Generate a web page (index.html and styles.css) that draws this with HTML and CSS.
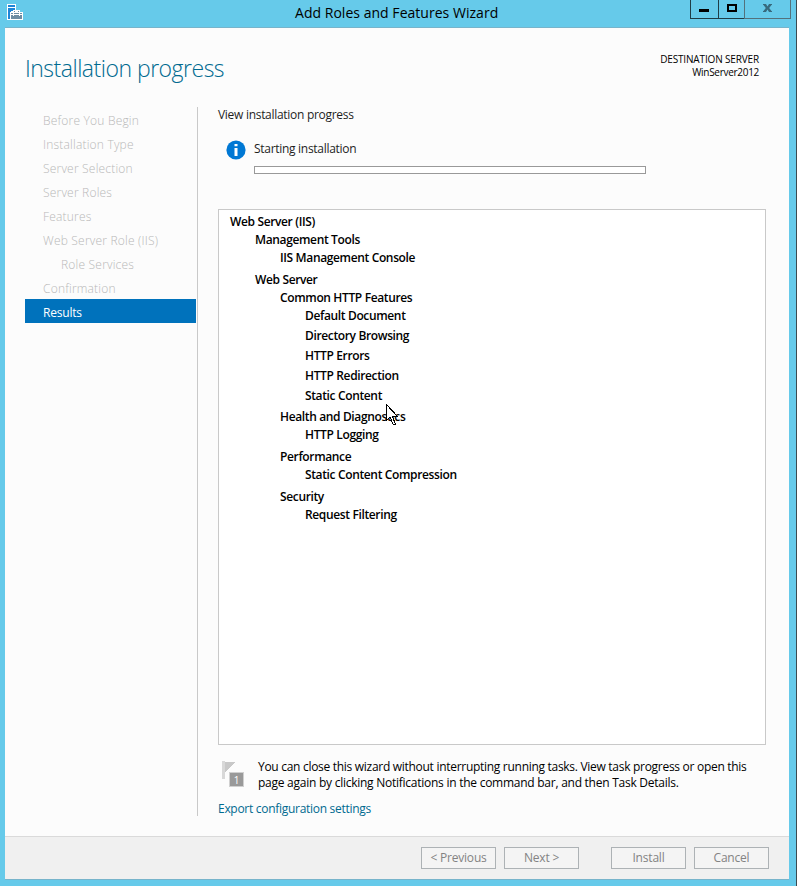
FILE: index.html
```html
<!DOCTYPE html>
<html lang="en">
<head>
<meta charset="utf-8">
<title>Add Roles and Features Wizard</title>
<link rel="stylesheet" href="styles.css">
</head>
<body>
<div class="window">
  <header class="titlebar">
    <svg class="app-icon" width="16" height="16" viewBox="0 0 16 16" shape-rendering="crispEdges">
      <path fill="#fff" d="M0 0h9v6h4v2h3v8H0z"/>
      <path fill="#1e86d8" d="M1 1h7v2H1zM1 4h7v2H6v1H4v1H3v7H1z"/>
      <path fill="#6f8da3" d="M7 7h5v1H7z"/>
      <path fill="#fff" d="M8 7h3v1H8z"/>
      <path fill="#6f8da3" d="M4 9h11v6H4z"/>
      <path fill="#fff" d="M4 10h2v1H4zM7 10h5v1H7zM13 10h2v1h-2zM6 9h1v3H6zM12 9h1v3h-1z"/>
    </svg>
    <h1 class="caption">Add Roles and Features Wizard</h1>
    <div class="controls">
      <div class="control"><svg width="27" height="18" shape-rendering="crispEdges"><path d="M8 9h10v3H8z"/></svg></div>
      <div class="control"><svg width="25" height="18" shape-rendering="crispEdges"><path fill-rule="evenodd" d="M8 4h10v8H8zM10 6v4h6V6z"/></svg></div>
      <div class="control close"><svg width="45" height="18"><path fill="#376a7e" d="M18 4h3l1.500 2.500L24 4h3v1h-.5l-2.300 3 2.300 3h.5v1h-3l-1.500-2.500L21 12h-3v-1h.5l2.300-3-2.300-3H18z"/></svg></div>
    </div>
  </header>
  <div class="client">
    <div class="page-head">
      <h2 class="page-title">Installation progress</h2>
      <div class="destination"><div class="dest-label">DESTINATION SERVER</div><div class="dest-name">WinServer2012</div></div>
    </div>
    <div class="body">
      <nav class="steps">
        <div class="step">Before You Begin</div>
        <div class="step">Installation Type</div>
        <div class="step">Server Selection</div>
        <div class="step">Server Roles</div>
        <div class="step">Features</div>
        <div class="step">Web Server Role (IIS)</div>
        <div class="step sub">Role Services</div>
        <div class="step">Confirmation</div>
        <div class="step active">Results</div>
      </nav>
      <main class="main">
        <p class="intro">View installation progress</p>
        <div class="status">
          <svg class="info" width="20" height="20" viewBox="0 0 20 20"><circle cx="10" cy="10" r="9.600" fill="#0078d4"/><path fill="#fff" d="M8.500 4h3v2.300h-3zM8.500 8h3v8h-3z"/></svg>
          <div class="status-body">
            <p class="status-text">Starting installation</p>
            <div class="progress"></div>
          </div>
        </div>
        <div class="results">
          <ul class="tree">
            <li><span>Web Server (IIS)</span>
              <ul>
                <li><span>Management Tools</span>
                  <ul><li><span>IIS Management Console</span></li></ul>
                </li>
                <li><span>Web Server</span>
                  <ul>
                    <li class="tight"><span>Common HTTP Features</span>
                      <ul>
                        <li><span>Default Document</span></li>
                        <li><span>Directory Browsing</span></li>
                        <li><span>HTTP Errors</span></li>
                        <li><span>HTTP Redirection</span></li>
                        <li><span>Static Content</span></li>
                      </ul>
                    </li>
                    <li><span>Health and Diagnostics</span>
                      <ul><li><span>HTTP Logging</span></li></ul>
                    </li>
                    <li><span>Performance</span>
                      <ul><li><span>Static Content Compression</span></li></ul>
                    </li>
                    <li><span>Security</span>
                      <ul><li><span>Request Filtering</span></li></ul>
                    </li>
                  </ul>
                </li>
              </ul>
            </li>
          </ul>
        </div>
        <div class="note">
          <div class="flag">
            <svg width="22" height="26" viewBox="0 0 22 26" shape-rendering="crispEdges"><path fill="#d8d8d8" d="M0 0h3v18H0z"/><path fill="#c8c8c8" d="M3 1h10L3 11z"/><path fill="#d0d0d0" d="M7 11h15v15H7z"/><path fill="#999" d="M8 12h13v13H8z"/></svg>
            <span class="badge">1</span>
          </div>
          <p class="note-text">You can close this wizard without interrupting running tasks. View task progress or open this<br><span class="note-end">page again by clicking Notifications in the command bar, and then Task Details.</span></p>
        </div>
        <a class="export">Export configuration settings</a>
      </main>
    </div>
    <footer class="footer">
      <button class="btn">&lt; Previous</button>
      <button class="btn">Next &gt;</button>
      <button class="btn install">Install</button>
      <button class="btn">Cancel</button>
    </footer>
  </div>
</div>
<svg class="cursor" width="12" height="21" viewBox="0 0 12 21" shape-rendering="crispEdges"><path fill="#fff" stroke="#000" d="M.5.5v16l3.500-3.500 3 7h2v-1l-2.500-6.500h5z"/></svg>
</body>
</html>
```
FILE: styles.css
```css
* { box-sizing: border-box; }
body {
  margin: 0;
  font-family: "Open Sans", "Noto Sans", sans-serif;
  font-size: 12px;
  color: #1e1e1e;
  letter-spacing: -0.29px;
}
h1, h2, p, ul { margin: 0; padding: 0; }
h1, h2 { font-weight: 400; }
.window {
  width: 797px;
  height: 886px;
  padding: 0 7px 6px 5px;
  background: #66caea;
  border-right: 1px solid #3b4a50;
  display: flex;
  flex-direction: column;
}
.titlebar { height: 27px; display: flex; flex: none; }
.app-icon { margin: 4px 0 0 2px; flex: none; }
.caption {
  flex: 1;
  font-size: 14px;
  line-height: 26px;
  color: #000;
  padding-left: 272px;
  white-space: nowrap;
  letter-spacing: 0.03px;
}
.controls {
  display: flex;
  width: 101px;
  height: 19px;
  margin-right: -2px;
  flex: none;
}
.control { border: solid #1f3d47; border-width: 0 0 1px 1px; height: 19px; }
.control svg { display: block; }
.close { border-color: #53717c; border-right-width: 1px; flex: 1; overflow: hidden; }
.client {
  flex: 1;
  background: #fcfcfc;
  border-top: 1px solid #77b4cb;
  border-bottom: 1px solid #77b4cb;
  display: flex;
  flex-direction: column;
}
.page-head {
  height: 79px;
  padding: 24px 30px 0 20px;
  display: flex;
  justify-content: space-between;
}
.page-title {
  font-size: 23px;
  font-weight: 300;
  line-height: 32px;
  color: #006a90;
  letter-spacing: -0.5px;
}
.destination { font-size: 10px; line-height: 13px; text-align: right; color: #000; padding-top: 1px; }
.dest-label { letter-spacing: -0.15px; }
.body { flex: 1; display: flex; padding-left: 20px; }
.steps {
  width: 173px;
  height: 709px;
  border-right: 1px solid #c9c9c9;
  padding-right: 1px;
}
.step {
  height: 24px;
  line-height: 27px;
  padding-left: 18px;
  color: #b8b8b8;
  font-weight: 300;
  letter-spacing: 0.2px;
}
.sub { padding-left: 36px; }
.active { background: #0072bc; color: #fff; font-weight: 400; letter-spacing: -0.2px; }
.main { width: 548px; margin-left: 20px; }
.intro { line-height: 16px; height: 32px; }
.status { display: flex; height: 70px; }
.info { margin: 1px 8px 0 8px; flex: none; }
.status-text { line-height: 20px; height: 27px; }
.progress { width: 392px; height: 8px; border: 1px solid #999; background: #fff; }
.results {
  height: 536px;
  background: #fff;
  border: 1px solid #c9c9c9;
  padding: 3px 11px;
  color: #000;
  font-weight: 600;
}
.tree li { list-style: none; padding-bottom: 2px; }
.tree li.tight { padding-bottom: 1px; }
.tree span { display: block; line-height: 18px; white-space: nowrap; letter-spacing: -0.36px; width: max-content; }
.tree ul { padding-left: 25px; }
.note { display: flex; height: 56px; padding-top: 14px; color: #000; }
.flag { position: relative; width: 36px; margin-left: 4px; padding-top: 2px; flex: none; }
.badge {
  position: absolute;
  left: 8px;
  top: 14px;
  width: 13px;
  line-height: 14px;
  text-align: center;
  color: #fff;
  font-size: 10px;
}
.note-text { line-height: 16px; white-space: nowrap; }
.note-end { letter-spacing: -0.255px; }
.export { display: block; width: max-content; line-height: 16px; color: #006a90; }
.footer {
  height: 43px;
  background: #f0f0f0;
  border-top: 1px solid #dadada;
  display: flex;
  justify-content: flex-end;
  gap: 8px;
  padding: 10px 20px 0 0;
}
.btn {
  width: 75px;
  height: 22px;
  border: 1px solid #adb2b5;
  background: #f4f4f4;
  color: #838383;
  font: inherit;
  letter-spacing: -0.2px;
  line-height: 20px;
  padding: 0;
}
.install { margin-left: 24px; }
.cursor { position: absolute; left: 386px; top: 404px; }
```
